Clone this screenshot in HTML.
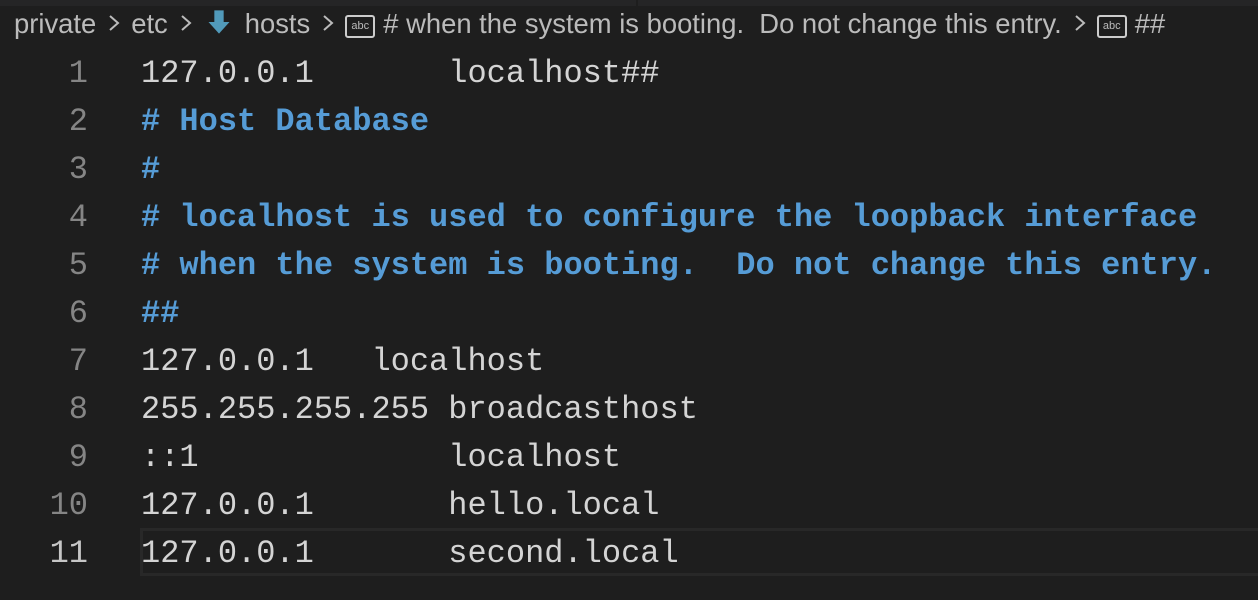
<!DOCTYPE html>
<html><head><style>
body{margin:0;width:1258px;height:600px;background:#1e1e1e;overflow:hidden;position:relative}
.tabs{position:absolute;left:0;top:0;width:1258px;height:6px;background:#252526}
.tabs i{position:absolute;top:0;width:2px;height:6px;background:#1e1e1e}
.bc{position:absolute;left:14px;top:8px;height:38px;line-height:38px;font:27.4px "Liberation Sans",sans-serif;color:#bbbbbb;white-space:nowrap}
.bc .s{display:inline-block;margin:0 11px 0 12px;vertical-align:-1px}
.abc{display:inline-block;width:26px;height:19px;border:2px solid #ccc;border-radius:3px;font-size:11px;line-height:19px;text-align:center;vertical-align:4px;margin-right:8px;box-sizing:content-box}
.ln{position:absolute;left:0;width:88px;text-align:right;font:32px "Liberation Mono",monospace;color:#858585;line-height:48px}
.ln.a{color:#c6c6c6}
.code{position:absolute;left:141px;font:32px "Liberation Mono",monospace;color:#d4d4d4;line-height:48px;white-space:pre}
.c{color:#569cd6;font-weight:bold}
.hl{position:absolute;left:140px;top:528px;width:1118px;height:48px;border:3px solid #282828;border-right:none;box-sizing:border-box}
</style></head><body>
<div class="tabs"><i style="left:636px"></i><i style="left:1262px"></i></div>
<div class="bc">private<svg class="s" width="12" height="22" viewBox="0 0 12 22"><path d="M2 4l8 7-8 7" stroke="#bbb" stroke-width="2" fill="none"/></svg>etc<svg class="s" width="12" height="22" viewBox="0 0 12 22"><path d="M2 4l8 7-8 7" stroke="#bbb" stroke-width="2" fill="none"/></svg><svg width="28" height="28" viewBox="0 0 24 24" style="vertical-align:-3px;margin:0 12px 0 2px"><path d="M8 2h8v10h5L12 22 3 12h5z" fill="#519aba"/></svg>hosts<svg class="s" width="12" height="22" viewBox="0 0 12 22"><path d="M2 4l8 7-8 7" stroke="#bbb" stroke-width="2" fill="none"/></svg><span class="abc">abc</span># when the system is booting.&nbsp; Do not change this entry.<svg class="s" width="12" height="22" viewBox="0 0 12 22"><path d="M2 4l8 7-8 7" stroke="#bbb" stroke-width="2" fill="none"/></svg><span class="abc">abc</span>##</div>
<div class="hl"></div>
<div class="ln" style="top:50px">1<br>2<br>3<br>4<br>5<br>6<br>7<br>8<br>9<br>10</div>
<div class="ln a" style="top:530px">11</div>
<div class="code" style="top:50px">127.0.0.1       localhost##
<span class="c"># Host Database</span>
<span class="c">#</span>
<span class="c"># localhost is used to configure the loopback interface</span>
<span class="c"># when the system is booting.  Do not change this entry.</span>
<span class="c">##</span>
127.0.0.1   localhost
255.255.255.255 broadcasthost
::1             localhost
127.0.0.1       hello.local
127.0.0.1       second.local</div>
</body></html>
